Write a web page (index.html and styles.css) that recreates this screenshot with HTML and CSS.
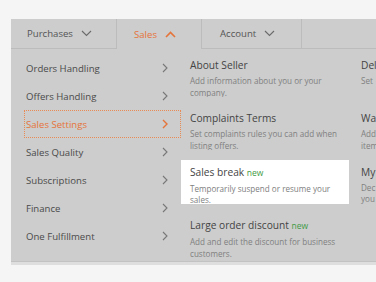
FILE: index.html
```html
<!DOCTYPE html>
<html lang="en">
<head>
    <meta charset="UTF-8">
    <meta name="viewport" content="width=device-width, initial-scale=1.0">
    <title>Sales Menu</title>
    <link rel="stylesheet" href="styles.css">
</head>
<body>

<div class="panel">
    <!-- Top tabs -->
    <div class="tabs">
        <div class="tab tab-purchases">
            <span>Purchases</span>
            <svg class="caret" width="11" height="7" viewBox="0 0 11 7"><polyline points="1,1 5.5,5.5 10,1"/></svg>
        </div>
        <div class="tab tab-sales active">
            <span>Sales</span>
            <svg class="caret" width="11" height="7" viewBox="0 0 11 7"><polyline points="1,6 5.5,1.5 10,6"/></svg>
        </div>
        <div class="tab tab-account">
            <span>Account</span>
            <svg class="caret" width="11" height="7" viewBox="0 0 11 7"><polyline points="1,1 5.5,5.5 10,1"/></svg>
        </div>
        <div class="tab-rest"></div>
    </div>

    <div class="menu">
        <!-- Left side menu -->
        <ul class="side">
            <li>Orders Handling <svg class="arrow" width="6" height="10" viewBox="0 0 6 10"><polyline points="1,1 5,5 1,9"/></svg></li>
            <li>Offers Handling <svg class="arrow" width="6" height="10" viewBox="0 0 6 10"><polyline points="1,1 5,5 1,9"/></svg></li>
            <li class="selected">Sales Settings <svg class="arrow" width="6" height="10" viewBox="0 0 6 10"><polyline points="1,1 5,5 1,9"/></svg></li>
            <li>Sales Quality <svg class="arrow" width="6" height="10" viewBox="0 0 6 10"><polyline points="1,1 5,5 1,9"/></svg></li>
            <li>Subscriptions <svg class="arrow" width="6" height="10" viewBox="0 0 6 10"><polyline points="1,1 5,5 1,9"/></svg></li>
            <li>Finance <svg class="arrow" width="6" height="10" viewBox="0 0 6 10"><polyline points="1,1 5,5 1,9"/></svg></li>
            <li>One Fulfillment <svg class="arrow" width="6" height="10" viewBox="0 0 6 10"><polyline points="1,1 5,5 1,9"/></svg></li>
        </ul>

        <!-- Settings column -->
        <div class="col col-main">
            <div class="item">
                <div class="item-title">About Seller</div>
                <div class="item-desc">Add information about you or your company.</div>
            </div>
            <div class="item">
                <div class="item-title">Complaints Terms</div>
                <div class="item-desc">Set complaints rules you can add when listing offers.</div>
            </div>
            <div class="item highlight">
                <div class="item-title">Sales break <span class="new">new</span></div>
                <div class="item-desc">Temporarily suspend or resume your sales.</div>
            </div>
            <div class="item">
                <div class="item-title">Large order discount <span class="new">new</span></div>
                <div class="item-desc">Add and edit the discount for business customers.</div>
            </div>
        </div>

        <div class="col col-next">
            <div class="item">
                <div class="item-title">Del</div>
                <div class="item-desc">Set</div>
            </div>
            <div class="item">
                <div class="item-title">Wa</div>
                <div class="item-desc">Add item</div>
            </div>
            <div class="item">
                <div class="item-title">My</div>
                <div class="item-desc">Dec you</div>
            </div>
        </div>
    </div>
</div>

</body>
</html>
```

FILE: styles.css
```css
html, body {
    margin: 0;
    padding: 0;
}

body {
    font-family: "Open Sans", "Liberation Sans", sans-serif;
    background: #f5f5f5;
    width: 376px;
    height: 282px;
    overflow: hidden;
}

.panel {
    margin: 19px 0 0 11px;
    width: 560px;
    height: 243px;
    background: #cdcdcd;
    border-bottom: 1px solid #c2c2c2;
    box-shadow: 0 3px 0 #dedede;
    box-sizing: border-box;
}

/* tabs */

.tabs {
    display: flex;
    height: 30px;
}

.tab {
    display: flex;
    align-items: center;
    gap: 8px;
    box-sizing: border-box;
    height: 30px;
    padding-left: 16px;
    font-size: 9.6px;
    color: #555;
    border-right: 1px solid #bcbcbc;
    border-bottom: 1px solid #bcbcbc;
}

.tab-purchases { width: 106px; }
.tab-sales { width: 85px; padding-left: 17px; }
.tab-account { width: 100px; padding-left: 18px; }

.tab.active {
    color: #e5743a;
    border-bottom: none;
}

.tab-rest {
    flex: 1;
    border-bottom: 1px solid #bcbcbc;
}

.caret {
    fill: none;
    stroke: #6a6a6a;
    stroke-width: 1.1;
}

.active .caret {
    stroke: #e5743a;
    stroke-width: 1.6;
}

/* menu body */

.menu {
    display: flex;
}

.side {
    list-style: none;
    margin: 0;
    padding: 5px 0 0 13px;
    width: 170px;
    box-sizing: border-box;
}

.side li {
    display: flex;
    align-items: center;
    justify-content: space-between;
    height: 28px;
    padding: 0 13px 0 2px;
    font-size: 9.6px;
    color: #4a4a4a;
    box-sizing: border-box;
}

.side li.selected {
    color: #e5743a;
    border: 1px dotted #e98a55;
    padding: 0 12px 0 1px;
}

.arrow {
    fill: none;
    stroke: #777;
    stroke-width: 1.1;
}

.selected .arrow {
    stroke: #e5743a;
    stroke-width: 1.4;
}

.col {
    padding-top: 4px;
    box-sizing: border-box;
}

.col-main {
    width: 171px;
}

.col-next {
    flex: 1;
}

.item {
    width: 168px;
    height: 44px;
    padding: 5px 9px 0;
    margin-bottom: 9.4px;
    box-sizing: border-box;
    overflow: hidden;
}

.item.highlight {
    background: #fff;
}

.item-title {
    font-size: 10.2px;
    line-height: 14px;
    color: #444;
    white-space: nowrap;
}

.item-desc {
    margin-top: 3px;
    font-size: 8.1px;
    line-height: 11.5px;
    color: #808080;
}

.col-next .item-desc {
    width: 14px;
}

.new {
    font-size: 8.5px;
    color: #3f9a45;
}
```
